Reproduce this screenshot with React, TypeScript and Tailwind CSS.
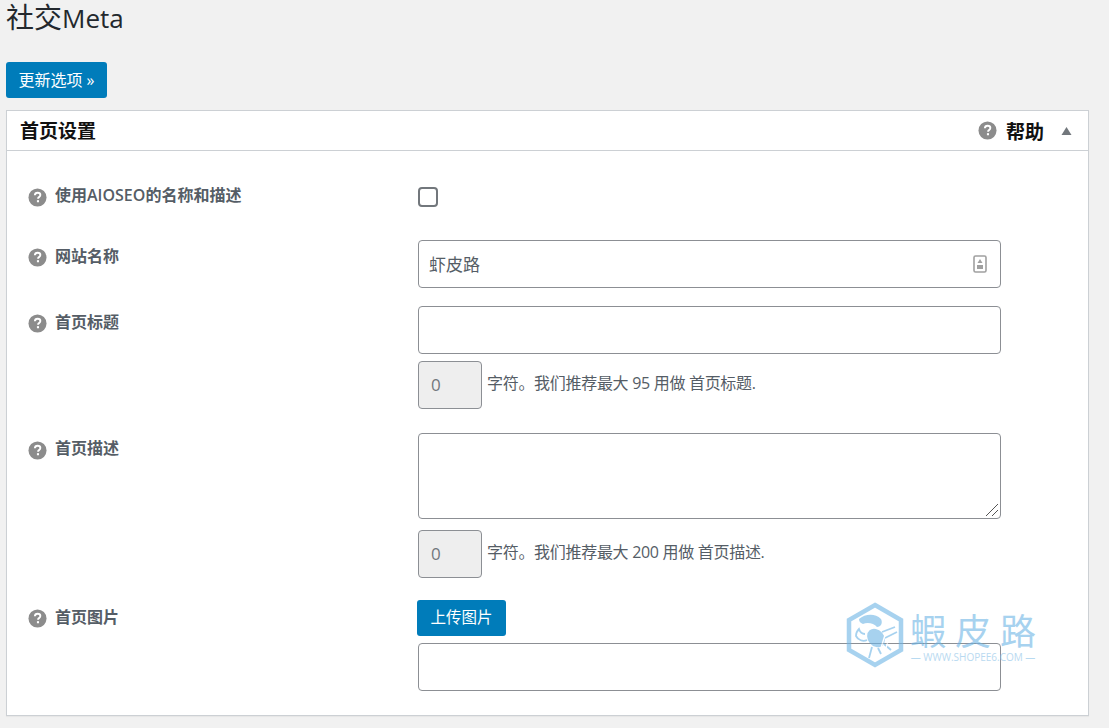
import type { ReactNode } from "react";

const FONT = "font-['Open_Sans','Noto_Sans_CJK_SC',sans-serif]";

function HelpIcon({ className = "" }: { className?: string }) {
  return (
    <svg viewBox="0 0 20 20" className={`w-[19px] h-[19px] shrink-0 ${className}`}>
      <circle cx="10" cy="10" r="9.5" fill="#8c8c8c" />
      <path
        d="M7.2 7.6c.1-1.7 1.3-2.6 2.9-2.6 1.7 0 2.9 1 2.9 2.4 0 1.1-.6 1.7-1.4 2.2-.8.5-1 .8-1 1.6"
        fill="none"
        stroke="#fff"
        strokeWidth="2"
      />
      <rect x="9.4" y="12.8" width="2.2" height="2.2" fill="#fff" />
    </svg>
  );
}

function Row({
  label,
  className = "",
  labelClass = "",
  textClass = "-mt-px",
  children,
}: {
  label: string;
  className?: string;
  labelClass?: string;
  textClass?: string;
  children: ReactNode;
}) {
  return (
    <div className={`flex ${className}`}>
      <div className={`w-[390px] shrink-0 flex items-start gap-2 ${labelClass}`}>
        <HelpIcon className="mt-[1px]" />
        <span className={`text-[16px] leading-[20px] font-semibold text-[#555d66] ${textClass}`}>{label}</span>
      </div>
      <div className="w-[583px]">{children}</div>
    </div>
  );
}

function Counter({ value, text }: { value: string; text: string }) {
  return (
    <div className="flex items-center gap-[5px]">
      <div className="w-16 h-12 flex items-center pl-3 text-[17px] text-[#72777c] bg-[#eeeeee] border border-[#8c8f94] rounded-[4px]">
        {value}
      </div>
      <span className="text-[16px] tracking-[-0.3px] text-[#555d66] -mt-[5px]">{text}</span>
    </div>
  );
}

function Watermark() {
  return (
    <div className="absolute left-[845px] top-[602px] flex items-center gap-[5px] opacity-60 pointer-events-none">
      <svg viewBox="0 0 60 66" className="w-[60px] h-[66px]">
        <path d="M30 3 56 18V48L30 63 4 48V18Z" fill="none" stroke="#6db5e6" strokeWidth="4.5" />
        <path d="M14 17c6-5 16-6 22 0 2 4 0 8-4 8-3-4-10-5-14-3-3-1-4-3-4-5Z" fill="#6db5e6" />
        <ellipse cx="31" cy="36" rx="10" ry="8" fill="#6db5e6" transform="rotate(50 31 36)" />
        <path d="M37 30 50 25M40 36 52 30M39 42 46 48M33 46 36 52M27 45 24 56M22 38c-4 2-9 0-11-4 0-3 1-5 3-7 1 3 3 5 6 5" fill="none" stroke="#6db5e6" strokeWidth="1.8" />
        <path d="M40 33 36 46M44 36 41 46" fill="none" stroke="#ffffff" strokeWidth="1.4" />
      </svg>
      <div className="flex flex-col items-center pt-[2px]">
        <span className="text-[36px] leading-[38px] tracking-[9px] -mr-[9px] text-[#6db5e6] font-['Noto_Sans_CJK_TC',sans-serif]">
          蝦皮路
        </span>
        <span className="mt-[3px] text-[10px] leading-[12px] text-[#8ac2e8]">— WWW.SHOPEE6.COM —</span>
      </div>
    </div>
  );
}

export default function App() {
  const inputCls = "block w-full h-12 bg-white border border-[#8c8f94] rounded-[4px]";

  return (
    <div className={`relative h-[728px] overflow-hidden bg-[#f1f1f1] px-[6px] ${FONT}`}>
      <h1 className="h-[62px] text-[26px] leading-[34px] text-[#23282d]">
        <span className="text-[28px] leading-[34px]">社交</span>Meta
      </h1>
      <button className="w-[101px] h-9 bg-[#007cba] rounded-[3px] text-white text-[16px] leading-none">更新选项 »</button>

      <div className="mt-3 w-[1083px] h-[606px] bg-white border border-[#ccd0d4] shadow-[0_1px_1px_rgba(0,0,0,0.04)]">
        <div className="h-10 flex items-center pl-[13px] border-b border-[#ccd0d4]">
          <h2 className="pt-[2px] text-[19px] font-bold text-[#111]">首页设置</h2>
          <HelpIcon className="ml-auto" />
          <span className="ml-[9px] pt-[4px] text-[19px] font-bold text-[#111]">帮助</span>
          <svg viewBox="0 0 10 8" className="w-[11px] h-[8px] ml-[17px] mr-[16px]">
            <path d="M5 0 10 8H0Z" fill="#72777c" />
          </svg>
        </div>

        <div className="pl-[21px] pt-[36px]">
          <Row label="使用AIOSEO的名称和描述" className="h-[53px]" textClass="-mt-[2px]">
            <div className="w-5 h-5 bg-white border-2 border-[#72777c] rounded-[4px]" />
          </Row>

          <Row label="网站名称" className="h-[66px]" labelClass="pt-[7px]">
            <div className={`${inputCls} flex items-center justify-between pl-[10px] pr-[13px]`}>
              <span className="pt-[2px] text-[17px] text-[#555d66]">虾皮路</span>
              <svg viewBox="0 0 14 18" className="w-[14px] h-[18px]">
                <rect x="1" y="1" width="12" height="16" rx="1.5" fill="none" stroke="#a0a0a0" strokeWidth="1.6" />
                <path d="M7 4 9.5 8H4.5Z" fill="#a0a0a0" />
                <rect x="4" y="10" width="6" height="4" fill="#a0a0a0" />
              </svg>
            </div>
          </Row>

          <Row label="首页标题" className="h-[127px]" labelClass="pt-[7px]">
            <div className={inputCls} />
            <div className="mt-[7px]">
              <Counter value="0" text="字符。我们推荐最大 95 用做 首页标题." />
            </div>
          </Row>

          <Row label="首页描述" className="h-[167px]" labelClass="pt-[7px]" textClass="-mt-[2px]">
            <div className="relative h-[86px] bg-white border border-[#8c8f94] rounded-[4px]">
              <svg viewBox="0 0 14 14" className="absolute right-[1px] bottom-[1px] w-[14px] h-[14px]">
                <path d="M1 13 13 1M7 13 13 7" stroke="#555" strokeWidth="1" fill="none" />
              </svg>
            </div>
            <div className="mt-[11px]">
              <Counter value="0" text="字符。我们推荐最大 200 用做 首页描述." />
            </div>
          </Row>

          <Row label="首页图片" labelClass="pt-[8px]" textClass="-mt-px">
            <button className="block -ml-px w-[89px] h-9 bg-[#007cba] rounded-[3px] text-white text-[15.5px] leading-none">
              上传图片
            </button>
            <div className={`${inputCls} mt-[7px]`} />
          </Row>
        </div>
      </div>

      <Watermark />
    </div>
  );
}
